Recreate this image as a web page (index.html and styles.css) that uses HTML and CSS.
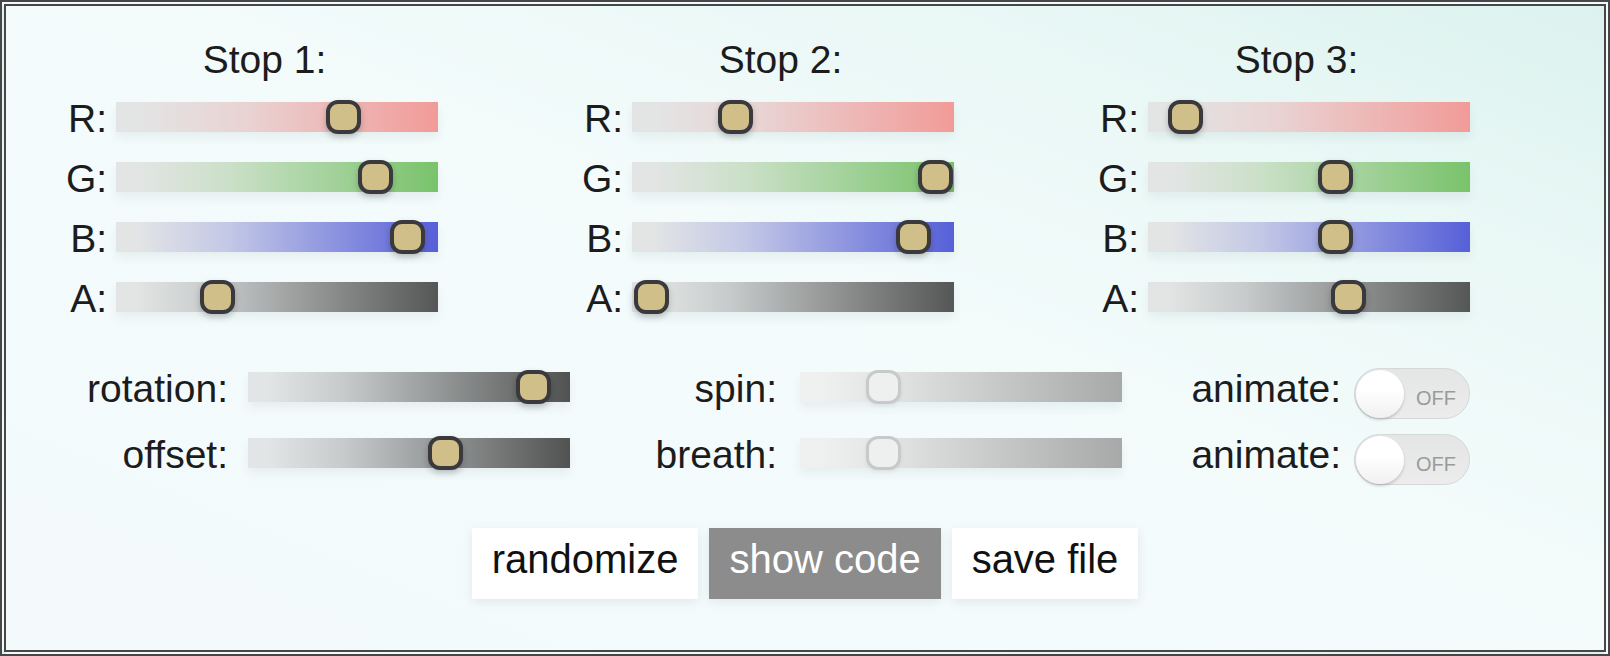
FILE: index.html
```html
<!DOCTYPE html>
<html lang="en">
<head>
<meta charset="utf-8">
<title>Gradient editor</title>
<link rel="stylesheet" href="styles.css">
</head>
<body>
<div class="frame">
  <div class="stops">
    <section class="stop">
      <h2 class="stop-title">Stop 1:</h2>
      <div class="row"><span class="lbl">R:</span><div class="track t-r"><span class="thumb" style="left:210px"></span></div></div>
      <div class="row"><span class="lbl">G:</span><div class="track t-g"><span class="thumb" style="left:242px"></span></div></div>
      <div class="row"><span class="lbl">B:</span><div class="track t-b"><span class="thumb" style="left:274px"></span></div></div>
      <div class="row"><span class="lbl">A:</span><div class="track t-a"><span class="thumb" style="left:84px"></span></div></div>
    </section>
    <section class="stop">
      <h2 class="stop-title">Stop 2:</h2>
      <div class="row"><span class="lbl">R:</span><div class="track t-r"><span class="thumb" style="left:86px"></span></div></div>
      <div class="row"><span class="lbl">G:</span><div class="track t-g"><span class="thumb" style="left:286px"></span></div></div>
      <div class="row"><span class="lbl">B:</span><div class="track t-b"><span class="thumb" style="left:264px"></span></div></div>
      <div class="row"><span class="lbl">A:</span><div class="track t-a"><span class="thumb" style="left:2px"></span></div></div>
    </section>
    <section class="stop">
      <h2 class="stop-title">Stop 3:</h2>
      <div class="row"><span class="lbl">R:</span><div class="track t-r"><span class="thumb" style="left:20px"></span></div></div>
      <div class="row"><span class="lbl">G:</span><div class="track t-g"><span class="thumb" style="left:170px"></span></div></div>
      <div class="row"><span class="lbl">B:</span><div class="track t-b"><span class="thumb" style="left:170px"></span></div></div>
      <div class="row"><span class="lbl">A:</span><div class="track t-a"><span class="thumb" style="left:183px"></span></div></div>
    </section>
  </div>

  <div class="globals">
    <span class="glabel gl-1">rotation:</span>
    <div class="track t-dark"><span class="thumb" style="left:268px"></span></div>
    <span class="glabel gl-2">spin:</span>
    <div class="track t-dim"><span class="thumb thumb-off" style="left:66px"></span></div>
    <span class="glabel gl-3">animate:</span>
    <div class="toggle"><span class="knob"></span><span class="toggle-text">OFF</span></div>

    <span class="glabel gl-1">offset:</span>
    <div class="track t-dark"><span class="thumb" style="left:180px"></span></div>
    <span class="glabel gl-2">breath:</span>
    <div class="track t-dim"><span class="thumb thumb-off" style="left:66px"></span></div>
    <span class="glabel gl-3">animate:</span>
    <div class="toggle"><span class="knob"></span><span class="toggle-text">OFF</span></div>
  </div>

  <div class="buttons">
    <button class="btn">randomize</button>
    <button class="btn btn-active">show code</button>
    <button class="btn">save file</button>
  </div>
</div>
</body>
</html>
```

FILE: styles.css
```css
html, body {
  margin: 0;
  padding: 0;
}

body {
  font-family: "Liberation Sans", Arial, Helvetica, sans-serif;
  color: #1c1c1c;
  background: #ffffff;
}

.frame {
  box-sizing: border-box;
  width: 1610px;
  height: 656px;
  border: 6px double #474747;
  background:
    linear-gradient(to bottom left, #dcf2ee 0%, #eaf8f6 22%, #f3fbfb 45%, #f4fafc 100%);
  overflow: hidden;
}

/* ---------- colour stops ---------- */
.stops {
  display: grid;
  grid-template-columns: repeat(3, 372px);
  column-gap: 144px;
  padding: 31px 0 0 60px;
}

.stop {
  display: flex;
  flex-direction: column;
}

.stop-title {
  margin: 0 0 5px 0;
  padding-left: 25px;
  font-size: 39px;
  font-weight: normal;
  line-height: 45px;
  text-align: center;
}

.row {
  display: flex;
  align-items: center;
  height: 60px;
}

.lbl {
  width: 41px;
  margin-right: 9px;
  padding-top: 3px;
  text-align: right;
  font-size: 39px;
  line-height: 45px;
}

/* ---------- tracks ---------- */
.track {
  position: relative;
  width: 322px;
  height: 30px;
  box-shadow: 0 6px 10px rgba(60, 80, 80, 0.07);
}

.t-r { background: linear-gradient(90deg, #e3e5e5 6%, #e9d3d3 40%, #f19b98 100%); }
.t-g { background: linear-gradient(90deg, #e3e5e5 6%, #cbe0c8 35%, #79c36b 100%); }
.t-b { background: linear-gradient(90deg, #e3e5e5 6%, #c3c8e6 35%, #5660d8 100%); }
.t-a { background: linear-gradient(90deg, #e3e5e5 6%, #c8cbcb 30%, #555656 100%); }
.t-dark { background: linear-gradient(90deg, #e1e5e5 6%, #c6caca 30%, #515252 100%); }
.t-dim { background: linear-gradient(90deg, #eff1f1 6%, #e1e3e3 30%, #a7a8a8 100%); }

.thumb {
  position: absolute;
  top: -2px;
  box-sizing: border-box;
  width: 35px;
  height: 34px;
  border: 4px solid #39393e;
  border-radius: 12px;
  background: #d1bf8a;
  box-shadow: 0 3px 6px rgba(0, 0, 0, 0.22);
}

.thumb-off {
  border: 3px solid #c8caca;
  background: #eef0f0;
  box-shadow: 0 2px 4px rgba(0, 0, 0, 0.06);
}

/* ---------- global controls ---------- */
.globals {
  display: grid;
  grid-template-columns: 198px 322px 230px 322px 232px 116px;
  grid-auto-rows: 66px;
  align-items: center;
  margin-top: 27px;
  padding-left: 44px;
}

.glabel {
  text-align: right;
  font-size: 39px;
  line-height: 45px;
  padding-top: 3px;
  white-space: nowrap;
}

.gl-1 { padding-right: 20px; }
.gl-2 { padding-right: 23px; }
.gl-3 { padding-right: 13px; }

.toggle {
  box-sizing: border-box;
  display: flex;
  align-items: center;
  width: 116px;
  height: 51px;
  margin-top: 13px;
  padding-left: 1px;
  border: 1.5px solid #d6d7d7;
  border-radius: 26px;
  background: linear-gradient(180deg, #e4e5e5, #ececec);
}

.knob {
  flex: none;
  width: 48px;
  height: 48px;
  border-radius: 50%;
  background: linear-gradient(180deg, #ffffff 40%, #f1f1f1);
  box-shadow: 0 2px 3px rgba(0, 0, 0, 0.18);
}

.toggle-text {
  margin-left: 12px;
  padding-top: 9px;
  font-size: 20px;
  line-height: 24px;
  color: #9a9a9a;
}

/* ---------- buttons ---------- */
.buttons {
  display: flex;
  justify-content: center;
  gap: 11px;
  margin-top: 42px;
}

.btn {
  font-family: "Liberation Sans", Arial, Helvetica, sans-serif;
  font-size: 40px;
  line-height: 46px;
  padding: 8px 20px 17px;
  border: none;
  border-radius: 0;
  background: #ffffff;
  color: #111111;
  box-shadow: 0 3px 10px rgba(0, 0, 0, 0.08);
  cursor: pointer;
}

.btn-active {
  background: #8c8c8c;
  color: #ffffff;
}
```
